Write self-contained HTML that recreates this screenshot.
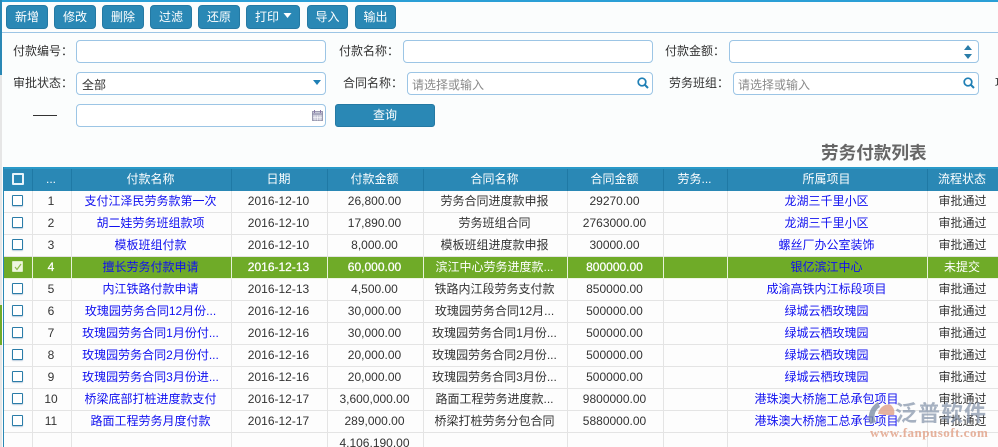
<!DOCTYPE html>
<html><head><meta charset="utf-8">
<style>
*{box-sizing:border-box}
html,body{margin:0;padding:0}
body{width:998px;height:447px;overflow:hidden;position:relative;background:#fbfdfd;font-family:"Liberation Sans","Noto Sans CJK SC",sans-serif;font-size:12px;color:#333}
.a{position:absolute}
.btn{position:absolute;top:5px;height:24px;background:#2a88b5;border:1px solid #2479a3;border-radius:4px;color:#fff;text-align:center;line-height:22px;font-size:12px}
.lb{position:absolute;font-size:12px;line-height:16px;color:#333;white-space:nowrap}
.in{position:absolute;height:23px;background:#fff;border:1px solid #9cc5e5;border-radius:4px;font-size:12px;line-height:24px;padding-left:5px;color:#333}
.ph{color:#8a8a8a;padding-left:4px}
.tb{position:absolute;left:4px;top:167px;width:994px;height:280px;overflow:hidden}
.r{position:absolute;left:0;width:994px;height:22px;border-bottom:1px solid #e4e4e4;background:#fdfdfd}
.c{position:absolute;top:0;height:100%;border-right:1px solid #e4e4e4;text-align:center;font-size:12px;line-height:20px;white-space:nowrap;overflow:hidden;color:#333;padding-right:2px}
.h{background:#2a88b5;height:24px;border-top:2px solid #2a9ac9;top:0;border-bottom:0}
.h .c{color:#fff;border-right:1px solid #1f79a5;line-height:20px}
.g{background:#6fab28;border-bottom:1px solid #eef5e4}
.g .c{color:#fff;-webkit-text-stroke:.25px #fff;border-right:1px solid #e8f2da}
.g .c.n{-webkit-text-stroke:0}
.g .c.l,.c.l{color:#1010f0;-webkit-text-stroke:0}
.c1{left:0;width:29px}.c2{left:29px;width:39px}.c3{left:68px;width:160px}.c4{left:228px;width:96px}.c5{left:324px;width:96px}.c6{left:420px;width:144px}.c7{left:564px;width:96px}.c8{left:660px;width:64px}.c9{left:724px;width:200px}.c10{left:924px;width:71px;border-right:0}
.cb{display:inline-block;width:11px;height:11px;border:1px solid #2a7ca8;background:#fff;border-radius:1px;vertical-align:middle;margin-top:-2px;margin-left:1px;box-shadow:0 1px 1px #bcd}
</style></head><body>
<div class="a" style="left:0;top:0;width:998px;height:1.5px;background:#2a9fd6"></div>
<div class="a" style="left:0;top:0;width:2px;height:75px;background:#2a88b5"></div>
<div class="a" style="left:0;top:75px;width:2px;height:372px;background:#e6e6e6"></div>
<div class="a" style="left:0;top:305px;width:2px;height:40px;background:#6fab28"></div>
<div class="a" style="left:3px;top:167px;width:1px;height:280px;background:#2a88b5;z-index:3"></div>

<div class="btn" style="left:6px;width:42px">新增</div>
<div class="btn" style="left:54px;width:42px">修改</div>
<div class="btn" style="left:102px;width:42px">删除</div>
<div class="btn" style="left:150px;width:42px">过滤</div>
<div class="btn" style="left:198px;width:42px">还原</div>
<div class="btn" style="left:246px;width:54px;text-align:left;padding-left:8px">打印<svg class="a" style="left:36px;top:7px" width="9" height="6"><path d="M0.500 0h8L4.500 5z" fill="#fff"/></svg></div>
<div class="btn" style="left:307px;width:41px">导入</div>
<div class="btn" style="left:355px;width:41px">输出</div>
<div class="a" style="left:2px;top:32px;width:996px;height:1px;background:#9cc5e5"></div>

<div class="lb" style="left:13px;top:43px">付款编号：</div>
<div class="in" style="left:76px;top:40px;width:250px"></div>
<div class="lb" style="left:339px;top:43px">付款名称：</div>
<div class="in" style="left:403px;top:40px;width:250px"></div>
<div class="lb" style="left:665px;top:43px">付款金额：</div>
<div class="in" style="left:729px;top:40px;width:250px"><svg class="a" style="left:232px;top:3px" width="12" height="16"><path d="M2 6L6 1l4 5z M2 10l4 5 4-5z" fill="#2a7ca8"/></svg></div>

<div class="lb" style="left:13px;top:75px">审批状态：</div>
<div class="in" style="left:76px;top:72px;width:250px">全部<svg class="a" style="left:236px;top:7px" width="8" height="5"><path d="M0 0h8L4 5z" fill="#1f7fb5"/></svg></div>
<div class="lb" style="left:343px;top:75px">合同名称：</div>
<div class="in ph" style="left:407px;top:72px;width:246px">请选择或输入<svg class="a" style="left:229px;top:4px" width="12" height="12"><circle cx="5" cy="5" r="3.800" fill="none" stroke="#1f7fb5" stroke-width="1.700"/><path d="M8 8l3 3" stroke="#1f7fb5" stroke-width="2"/></svg></div>
<div class="lb" style="left:669px;top:75px">劳务班组：</div>
<div class="in ph" style="left:733px;top:72px;width:246px">请选择或输入<svg class="a" style="left:229px;top:4px" width="12" height="12"><circle cx="5" cy="5" r="3.800" fill="none" stroke="#1f7fb5" stroke-width="1.700"/><path d="M8 8l3 3" stroke="#1f7fb5" stroke-width="2"/></svg></div>
<div class="lb" style="left:995px;top:75px">项</div>

<div class="a" style="left:33px;top:115px;width:24px;height:1px;background:#333"></div>
<div class="in" style="left:76px;top:104px;width:250px"><svg class="a" style="left:235px;top:5px" width="11" height="11"><rect x="0.500" y="1.500" width="10" height="9" fill="#c9c9d8" stroke="#9a9ab0"/><path d="M0 4h11" stroke="#8a8aa8"/><path d="M2.500 0v3M8.500 0v3" stroke="#8a7aa8"/><path d="M3 5.500v5M5.500 5.500v5M8 5.500v5M1 7.500h9" stroke="#fff" stroke-width=".6"/></svg></div>
<div class="btn" style="left:335px;top:104px;width:100px;height:23px;border-radius:3px;line-height:21px">查询</div>

<div class="a" style="left:821px;top:142px;font-size:17.600px;font-weight:bold;color:#666;line-height:22px;white-space:nowrap">劳务付款列表</div>

<div class="tb">
<div class="r h"><div class="c c1"><span class="cb" style="background:#2a88b5;border:2px solid #e8f4fa;width:12px;height:12px;box-shadow:none"></span></div><div class="c c2">...</div><div class="c c3">付款名称</div><div class="c c4">日期</div><div class="c c5">付款金额</div><div class="c c6">合同名称</div><div class="c c7">合同金额</div><div class="c c8">劳务...</div><div class="c c9">所属项目</div><div class="c c10">流程状态</div></div>

<div class="r" style="top:24px"><div class="c c1"><span class="cb"></span></div><div class="c c2">1</div><div class="c c3 l">支付江泽民劳务款第一次</div><div class="c c4">2016-12-10</div><div class="c c5">26,800.00</div><div class="c c6">劳务合同进度款申报</div><div class="c c7">29270.00</div><div class="c c8"></div><div class="c c9 l">龙湖三千里小区</div><div class="c c10">审批通过</div></div>
<div class="r" style="top:46px"><div class="c c1"><span class="cb"></span></div><div class="c c2">2</div><div class="c c3 l">胡二娃劳务班组款项</div><div class="c c4">2016-12-10</div><div class="c c5">17,890.00</div><div class="c c6">劳务班组合同</div><div class="c c7">2763000.00</div><div class="c c8"></div><div class="c c9 l">龙湖三千里小区</div><div class="c c10">审批通过</div></div>
<div class="r" style="top:68px"><div class="c c1"><span class="cb"></span></div><div class="c c2">3</div><div class="c c3 l">模板班组付款</div><div class="c c4">2016-12-10</div><div class="c c5">8,000.00</div><div class="c c6">模板班组进度款申报</div><div class="c c7">30000.00</div><div class="c c8"></div><div class="c c9 l">螺丝厂办公室装饰</div><div class="c c10">审批通过</div></div>
<div class="r g" style="top:90px"><div class="c c1"><span class="cb" style="background:#eef6e0;border-color:#dcebc4;box-shadow:none;position:relative"><svg class="a" style="left:1px;top:1px" width="8" height="8"><path d="M1 4l2 2.500L7 1" fill="none" stroke="#8dbb4a" stroke-width="1.200"/></svg></span></div><div class="c c2">4</div><div class="c c3 l">擅长劳务付款申请</div><div class="c c4">2016-12-13</div><div class="c c5">60,000.00</div><div class="c c6 n">滨江中心劳务进度款...</div><div class="c c7">800000.00</div><div class="c c8"></div><div class="c c9 l">银亿滨江中心</div><div class="c c10 n">未提交</div></div>
<div class="r" style="top:112px"><div class="c c1"><span class="cb"></span></div><div class="c c2">5</div><div class="c c3 l">内江铁路付款申请</div><div class="c c4">2016-12-13</div><div class="c c5">4,500.00</div><div class="c c6">铁路内江段劳务支付款</div><div class="c c7">850000.00</div><div class="c c8"></div><div class="c c9 l">成渝高铁内江标段项目</div><div class="c c10">审批通过</div></div>
<div class="r" style="top:134px"><div class="c c1"><span class="cb"></span></div><div class="c c2">6</div><div class="c c3 l">玫瑰园劳务合同12月份...</div><div class="c c4">2016-12-16</div><div class="c c5">30,000.00</div><div class="c c6">玫瑰园劳务合同12月...</div><div class="c c7">500000.00</div><div class="c c8"></div><div class="c c9 l">绿城云栖玫瑰园</div><div class="c c10">审批通过</div></div>
<div class="r" style="top:156px"><div class="c c1"><span class="cb"></span></div><div class="c c2">7</div><div class="c c3 l">玫瑰园劳务合同1月份付...</div><div class="c c4">2016-12-16</div><div class="c c5">30,000.00</div><div class="c c6">玫瑰园劳务合同1月份...</div><div class="c c7">500000.00</div><div class="c c8"></div><div class="c c9 l">绿城云栖玫瑰园</div><div class="c c10">审批通过</div></div>
<div class="r" style="top:178px"><div class="c c1"><span class="cb"></span></div><div class="c c2">8</div><div class="c c3 l">玫瑰园劳务合同2月份付...</div><div class="c c4">2016-12-16</div><div class="c c5">20,000.00</div><div class="c c6">玫瑰园劳务合同2月份...</div><div class="c c7">500000.00</div><div class="c c8"></div><div class="c c9 l">绿城云栖玫瑰园</div><div class="c c10">审批通过</div></div>
<div class="r" style="top:200px"><div class="c c1"><span class="cb"></span></div><div class="c c2">9</div><div class="c c3 l">玫瑰园劳务合同3月份进...</div><div class="c c4">2016-12-16</div><div class="c c5">20,000.00</div><div class="c c6">玫瑰园劳务合同3月份...</div><div class="c c7">500000.00</div><div class="c c8"></div><div class="c c9 l">绿城云栖玫瑰园</div><div class="c c10">审批通过</div></div>
<div class="r" style="top:222px"><div class="c c1"><span class="cb"></span></div><div class="c c2">10</div><div class="c c3 l">桥梁底部打桩进度款支付</div><div class="c c4">2016-12-17</div><div class="c c5">3,600,000.00</div><div class="c c6">路面工程劳务进度款...</div><div class="c c7">9800000.00</div><div class="c c8"></div><div class="c c9 l">港珠澳大桥施工总承包项目</div><div class="c c10">审批通过</div></div>
<div class="r" style="top:244px"><div class="c c1"><span class="cb"></span></div><div class="c c2">11</div><div class="c c3 l">路面工程劳务月度付款</div><div class="c c4">2016-12-17</div><div class="c c5">289,000.00</div><div class="c c6">桥梁打桩劳务分包合同</div><div class="c c7">5880000.00</div><div class="c c8"></div><div class="c c9 l">港珠澳大桥施工总承包项目</div><div class="c c10">审批通过</div></div>
<div class="r" style="top:266px;height:22px;border-bottom:0"><div class="c c1"></div><div class="c c2" style="line-height:28px">...</div><div class="c c3"></div><div class="c c4"></div><div class="c c5">4,106,190.00</div><div class="c c6"></div><div class="c c7"></div><div class="c c8"></div><div class="c c9"></div><div class="c c10"></div></div>
</div>

<svg class="a" style="left:866px;top:401px;z-index:5" width="30" height="24"><path d="M12 1C4 6 1 14 4 23l6-2C7 15 9 9 14 6z" fill="#7d8ea6" opacity=".8"/><path d="M12 13c1-7 8-11 13-9 3 3 4 6 3 10H18c-3-1-5-1-6-1z" fill="#e0a58e" opacity=".85"/></svg>
<div class="a" style="left:895px;top:402px;font-size:22px;font-weight:bold;letter-spacing:1px;line-height:24px;color:#8a98ae;opacity:.75;z-index:5;white-space:nowrap">泛普软件</div>
<div class="a" style="left:870px;top:426px;font-family:'Liberation Serif',serif;font-size:13px;font-weight:bold;line-height:14px;letter-spacing:.5px;color:#e3a58c;opacity:.85;z-index:5;white-space:nowrap">www.fanpusoft.com</div>
</body></html>
